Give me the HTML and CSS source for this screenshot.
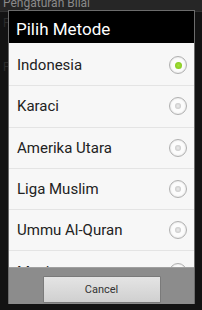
FILE: index.html
```
<!DOCTYPE html>
<html>
<head>
    <meta charset="utf-8">
    <title>Pilih Metode</title>
    <link rel="stylesheet" href="styles.css">
</head>
<body>
    <div class="screen">
        <div class="app">
            <div class="app-title">Pengaturan Bilal</div>
            <div class="app-row">P</div>
            <div class="app-row">F</div>
        </div>

        <div class="dialog">
            <div class="dialog-title">Pilih Metode</div>
            <ul class="choices">
                <li class="choice">Indonesia <span class="radio checked"></span></li>
                <li class="choice">Karaci <span class="radio"></span></li>
                <li class="choice">Amerika Utara <span class="radio"></span></li>
                <li class="choice">Liga Muslim <span class="radio"></span></li>
                <li class="choice">Ummu Al-Quran <span class="radio"></span></li>
                <li class="choice">Mesir <span class="radio"></span></li>
            </ul>
            <div class="buttons">
                <button class="btn">Cancel</button>
            </div>
        </div>
    </div>
</body>
</html>
```

FILE: styles.css
```
body {
    margin: 0;
    background: #000;
    font-family: Roboto, "Noto Sans", sans-serif;
}

.screen {
    position: relative;
    width: 202px;
    height: 310px;
    overflow: hidden;
    background: #131313;
}

.app-title {
    height: 11px;
    line-height: 6px;
    padding-left: 3px;
    font-size: 12px;
    color: #8a8a8a;
    background: #262626;
    border-bottom: 1px solid #333;
}

.app-row {
    height: 40px;
    padding: 4px 3px 0;
    font-size: 12px;
    color: #2c2c2c;
}

/* dialog sits on top of the dimmed settings screen */
.dialog {
    position: absolute;
    left: 8px;
    top: 10px;
    width: 187px;
    box-sizing: border-box;
    border: 1px solid #6c6c6c;
    border-bottom: none;
    background: #000;
}

.dialog-title {
    height: 32px;
    line-height: 36px;
    padding-left: 7px;
    font-size: 17px;
    color: #fff;
}

.choices {
    list-style: none;
    margin: 0;
    padding: 0;
    height: 224px;
    overflow: hidden;
    background: #f7f7f7;
}

.choice {
    display: flex;
    align-items: center;
    justify-content: space-between;
    height: 40.3px;
    padding: 2px 7px 0 8px;
    box-sizing: content-box;
    margin-top: -2px;
    border-bottom: 1px solid #e4e4e4;
    font-size: 15px;
    color: #222;
}

.choice:first-child {
    margin-top: 0;
}

.radio {
    position: relative;
    width: 16px;
    height: 16px;
    border: 1px solid #b0b0b0;
    border-radius: 50%;
    background: #fcfcfc;
    box-shadow: inset 0 0 2px #d0d0d0;
}

.radio::after {
    content: "";
    position: absolute;
    left: 5px;
    top: 5px;
    width: 6px;
    height: 6px;
    border-radius: 50%;
    background: radial-gradient(#ececec, #bdbdbd);
}

.radio.checked::after {
    left: 4.5px;
    top: 4.5px;
    width: 7px;
    height: 7px;
    background: radial-gradient(#a6e23a, #7cc21a);
}

.buttons {
    height: 37px;
    box-sizing: border-box;
    padding-top: 8px;
    border-top: 1px solid #a0a0a0;
    background: #8c8c8c;
    text-align: center;
}

.btn {
    width: 118px;
    height: 27px;
    border: 1px solid #7a7a7a;
    border-radius: 1px;
    background: linear-gradient(#e4e4e4, #d0d0d0);
    font-family: Roboto, "Noto Sans", sans-serif;
    font-size: 11px;
    color: #333;
}
```
